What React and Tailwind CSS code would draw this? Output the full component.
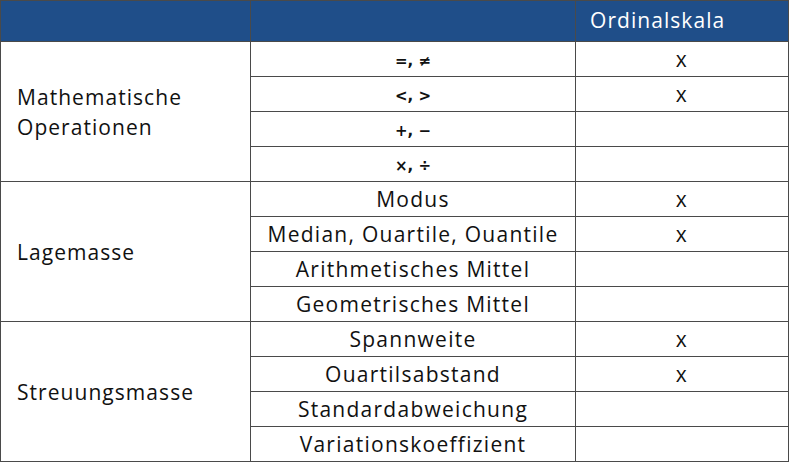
const groups = [
  {
    label: ["Mathematische", "Operationen"],
    rows: [
      { name: "=, ≠", x: true, sym: true },
      { name: "<, >", x: true, sym: true },
      { name: "+, −", x: false, sym: true },
      { name: "×, ÷", x: false, sym: true },
    ],
  },
  {
    label: ["Lagemasse"],
    rows: [
      { name: "Modus", x: true },
      { name: "Median, Ouartile, Ouantile", x: true },
      { name: "Arithmetisches Mittel", x: false },
      { name: "Geometrisches Mittel", x: false },
    ],
  },
  {
    label: ["Streuungsmasse"],
    rows: [
      { name: "Spannweite", x: true },
      { name: "Ouartilsabstand", x: true },
      { name: "Standardabweichung", x: false },
      { name: "Variationskoeffizient", x: false },
    ],
  },
];

export default function App() {
  return (
    <div className="w-[790px] h-[462px] bg-white" style={{ fontFamily: '"Open Sans", sans-serif' }}>
      <table className="w-[789px] table-fixed border-collapse text-[21px] leading-[28px] tracking-[0.06em] text-[#111]">
        <thead>
          <tr className="h-[41px] bg-[#1f4e89] text-white">
            <th className="w-[250px] border border-[#4a4a4a] font-normal"></th>
            <th className="w-[325px] border border-[#4a4a4a] font-normal"></th>
            <th className="border border-[#4a4a4a] font-medium text-left pl-[14px] pb-0.5 tracking-[0.05em]">Ordinalskala</th>
          </tr>
        </thead>
        <tbody>
          {groups.map((g) =>
            g.rows.map((r, i) => (
              <tr key={r.name} className="h-[35px]">
                {i === 0 && (
                  <td rowSpan={g.rows.length} className="border border-[#4a4a4a] pl-4 align-middle leading-[30px] tracking-[0.05em]">
                    {g.label.map((l) => (
                      <div key={l}>{l}</div>
                    ))}
                  </td>
                )}
                <td className="border border-[#4a4a4a] text-center p-0 whitespace-nowrap">
                  {r.sym ? (
                    <span className="font-bold text-[15px] tracking-normal" style={{ fontFamily: '"DejaVu Sans", sans-serif' }}>
                      {r.name}
                    </span>
                  ) : (
                    r.name
                  )}
                </td>
                <td className="border border-[#4a4a4a] text-center p-0">{r.x ? "x" : ""}</td>
              </tr>
            ))
          )}
        </tbody>
      </table>
    </div>
  );
}
